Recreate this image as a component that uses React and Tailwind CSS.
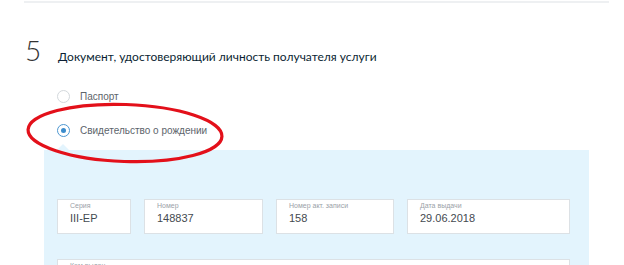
import React from 'react'

function Radio({ checked, label, className = '' }) {
  return (
    <div className={`flex items-center h-[16px] ${className}`}>
      {checked ? (
        <span className="w-[13px] h-[13px] rounded-full border-[1.5px] border-[#4d97d1] flex items-center justify-center bg-white">
          <span className="w-[5px] h-[5px] rounded-full bg-[#3b8ccc]" />
        </span>
      ) : (
        <span className="w-[13px] h-[13px] rounded-full border border-[#d3d8dc] bg-white" />
      )}
      <span className="ml-[10px] text-[10px] text-[#5d646b] font-['Liberation_Sans',sans-serif]">{label}</span>
    </div>
  )
}

function Field({ label, value, className = '' }) {
  return (
    <div className={`h-[35px] bg-white border border-[#dce1e5] pl-[12px] pt-[1px] font-['Liberation_Sans',sans-serif] ${className}`}>
      <div className="text-[7px] leading-[9px] text-[#9aa1a7]">{label}</div>
      <div className="text-[11px] leading-[14px] text-[#444a50] mt-[1px]">{value}</div>
    </div>
  )
}

export default function App() {
  return (
    <div className="w-[624px] h-[265px] overflow-hidden bg-white relative font-['Lato',sans-serif]">
      <div className="ml-[24px] w-[585px] mt-[1px] border-t-2 border-[#eef0f2]">
        {/* Section header */}
        <div className="flex items-baseline pt-[33px]">
          <span className="w-[34px] pl-[1px] text-[28px] font-light leading-[28px] text-[#333]">5</span>
          <h2 className="text-[12px] text-[#0b1f33]">Документ, удостоверяющий личность получателя услуги</h2>
        </div>

        {/* Document type */}
        <div className="ml-[33px] mt-[22px] flex flex-col gap-[18px]">
          <Radio label="Паспорт" />
          <Radio checked label="Свидетельство о рождении" />
        </div>

        {/* Details panel */}
        <div className="relative ml-[20px] mt-[12px] w-[545px] h-[200px] bg-[#e3f4fd] pt-[49px] pl-[13px]">
          <span className="absolute -top-[6px] left-[13px] w-0 h-0 border-l-[6px] border-r-[6px] border-b-[6px] border-l-transparent border-r-transparent border-b-[#e3f4fd]" />
          <div className="flex gap-[13px]">
            <Field label="Серия" value="III-EP" className="w-[74px]" />
            <Field label="Номер" value="148837" className="w-[119px]" />
            <Field label="Номер акт. записи" value="158" className="w-[118px]" />
            <Field label="Дата выдачи" value="29.06.2018" className="w-[163px]" />
          </div>
          <Field label="Кем выдан" value="" className="w-[513px] mt-[25px]" />
        </div>
      </div>

      {/* Hand-drawn highlight */}
      <svg className="absolute left-[24px] top-[100px] pointer-events-none" width="202" height="66" viewBox="0 0 202 66">
        <ellipse cx="101" cy="33" rx="97" ry="28.5" fill="none" stroke="#e3101a" strokeWidth="3.2" transform="rotate(2 101 33)" />
      </svg>
    </div>
  )
}
